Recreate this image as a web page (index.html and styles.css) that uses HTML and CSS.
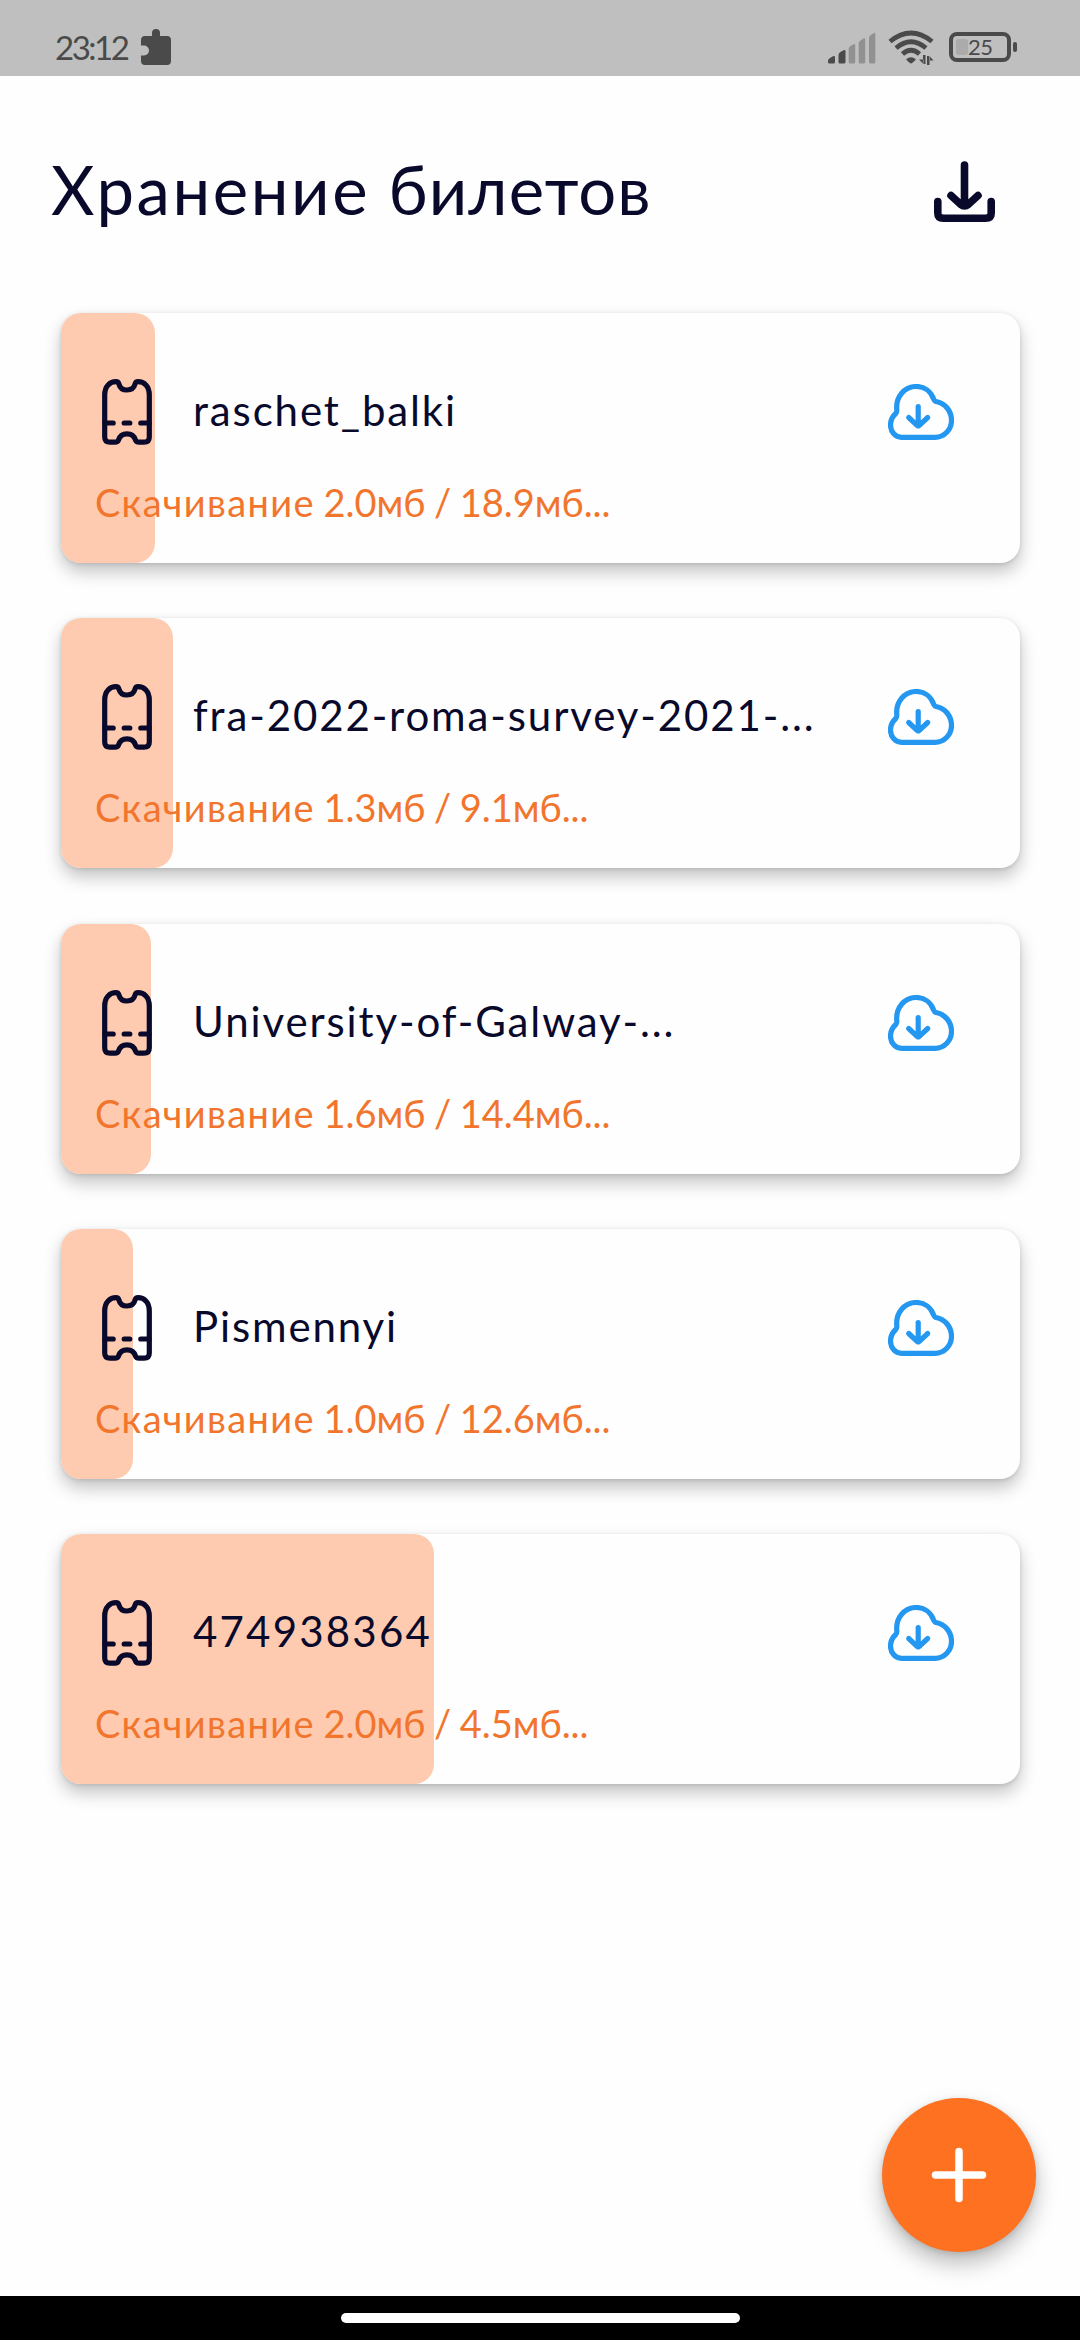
FILE: index.html
```html
<!DOCTYPE html>
<html lang="ru">
<head>
<meta charset="utf-8">
<title>Хранение билетов</title>
<link rel="stylesheet" href="styles.css">
</head>
<body>
<svg class="symbols" aria-hidden="true">
  <symbol id="ticket" viewBox="22 19 50 66">
    <path d="M24.7 35C24.7 26 30 21.7 36 21.7Q38.300 21.700 39 24.200C40 28 43 30 47 30S54 28 55 24.200Q55.700 21.700 58 21.700C64 21.700 69.300 26 69.300 35V77Q69.300 82.200 64 82.200H59Q56.200 82.200 55.500 80C54.300 76 51 73.800 47 73.800S39.700 76 38.500 80Q37.800 82.200 35 82.200H30Q24.700 82.200 24.700 77Z"/>
    <path d="M25 63H33.200M44.200 63H49.800M60.800 63H69"/>
  </symbol>
  <symbol id="cloud" viewBox="18 24 66 56">
    <path d="M31.500 77.300H65C74.500 77.300 81.500 69.500 81.500 60.500C81.500 51 75 43 66 41.500Q64.500 41 63.800 39.500C61 31.500 54.500 26.500 46.500 26.500C34.500 26.500 25.500 36.500 26.800 50Q27 52 25.700 53.500C22 57 20.500 60.500 20.500 65C20.500 72 25.500 77.300 31.500 77.300Z"/>
    <path d="M48.200 46.500V66M38.700 57.500L46.300 64.700Q48.200 66.400 50.100 64.700L57.700 57.500"/>
  </symbol>
</svg>
<div class="screen">
  <div class="status">
    <div class="status-left">
      <span class="clock">23:12</span>
      <svg class="puzzle" viewBox="0 0 30 36"><path d="M4 7H11V4Q11 0 15 0T19 4V7H26Q30 7 30 11V32Q30 36 26 36H4Q0 36 0 32V26.500H3A5 5 0 0 0 3 16.500H0V11Q0 7 4 7Z"/></svg>
    </div>
    <div class="status-right">
      <svg class="signal" viewBox="0 0 48 32">
        <path class="on" d="M0 29Q0 27 2 26L5 24.200Q7 23.500 7 25V30Q7 31.500 5.500 31.500H1.500Q0 31.500 0 30ZM10.500 23Q10.500 21 12.500 20L15.500 18.200Q17.500 17.500 17.500 19V30Q17.500 31.500 16 31.500H12Q10.500 31.500 10.500 30Z"/>
        <path class="off" d="M20.700 17Q20.700 15 22.500 14L25.500 12.200Q27.200 11.500 27.200 13V30Q27.200 31.500 26 31.500H22.200Q20.700 31.500 20.700 30ZM30.700 11.500Q30.700 9.500 32.500 8.500L35.500 6.500Q37.200 5.800 37.200 7.300V30Q37.200 31.500 36 31.500H32.200Q30.700 31.500 30.700 30ZM41 6Q41 4 42.800 3L45.500 1.200Q47.300 0 47.300 2V30Q47.300 31.500 46 31.500H42.500Q41 31.500 41 30Z"/>
      </svg>
      <svg class="wifi" viewBox="0 0 46 36">
        <path class="arc" d="M2 11.500Q23 -5.500 44 11.500M8 18Q23 5.500 38 18M14.500 24Q23 16.500 31.500 24"/>
        <path d="M18 29.500Q23 25 28 29.500L24.500 32.800Q23 34 21.500 32.800Z"/>
        <path d="M35 25V34H37.500V25ZM35.500 34L31 29.500H35.500ZM39 26V35H41.500V26ZM41 25.500L45.500 30.500H41Z"/>
      </svg>
      <div class="battery"><span class="charge"></span><span class="percent">25</span></div>
      <span class="tip"></span>
    </div>
  </div>
  <header class="header">
    <h1><span class="wide">Хранение</span> билетов</h1>
    <svg class="download" viewBox="0 0 61 61"><path d="M3.800 40.500V52Q3.800 57.200 9.500 57.200H51.500Q57.200 57.200 57.200 52V40.500M30.500 4V43M17 34.500L26.500 43.300Q30.500 46.500 34.500 43.300L44 34.500"/></svg>
  </header>
  <main class="list">
    <article class="card"><div class="progress" style="width:94px"></div>
      <div class="row"><svg class="ticket"><use href="#ticket"/></svg><h2>raschet_balki</h2><svg class="cloud"><use href="#cloud"/></svg></div>
      <p><span class="state">Скачивание</span> 2.0мб / 18.9мб...</p></article>
    <article class="card"><div class="progress" style="width:112px"></div>
      <div class="row"><svg class="ticket"><use href="#ticket"/></svg><h2>fra-2022-roma-survey-2021-...</h2><svg class="cloud"><use href="#cloud"/></svg></div>
      <p><span class="state">Скачивание</span> 1.3мб / 9.1мб...</p></article>
    <article class="card"><div class="progress" style="width:90px"></div>
      <div class="row"><svg class="ticket"><use href="#ticket"/></svg><h2>University-of-Galway-...</h2><svg class="cloud"><use href="#cloud"/></svg></div>
      <p><span class="state">Скачивание</span> 1.6мб / 14.4мб...</p></article>
    <article class="card"><div class="progress" style="width:72px"></div>
      <div class="row"><svg class="ticket"><use href="#ticket"/></svg><h2>Pismennyi</h2><svg class="cloud"><use href="#cloud"/></svg></div>
      <p><span class="state">Скачивание</span> 1.0мб / 12.6мб...</p></article>
    <article class="card"><div class="progress" style="width:373px"></div>
      <div class="row"><svg class="ticket"><use href="#ticket"/></svg><h2 class="digits">474938364</h2><svg class="cloud"><use href="#cloud"/></svg></div>
      <p><span class="state">Скачивание</span> 2.0мб / 4.5мб...</p></article>
  </main>
  <button class="fab" aria-label="Добавить"><svg viewBox="0 0 56 56"><path d="M28 4.500V51.500M4.500 28H51.500"/></svg></button>
  <footer class="nav"><span class="handle"></span></footer>
</div>
</body>
</html>
```
FILE: styles.css
```css
* { box-sizing: border-box; }
body { margin: 0; background: #fefefe; font-family: Lato, "Noto Sans", sans-serif; color: #09092b; }
.symbols { display: none; }
h1, h2, p { margin: 0; font-weight: 400; white-space: nowrap; }
.screen { position: relative; width: 1080px; height: 2340px; display: flex; flex-direction: column; overflow: hidden; }

.status { height: 76px; flex: none; background: #bfbfbf; color: #4a4a4a; display: flex; justify-content: space-between; padding: 0 63px 0 55px; }
.status svg { fill: #4a4a4a; }
.status-left, .status-right { display: flex; align-items: flex-start; }
.clock { width: 86px; font-size: 33px; line-height: 40px; margin-top: 27px; letter-spacing: -2.500px; }
.puzzle { width: 30px; height: 36px; margin-top: 29px; }
.signal { width: 48px; height: 32px; margin-top: 31.500px; }
.status .off { fill: #919191; }
.wifi { width: 46px; height: 36px; margin: 30px 0 0 12px; }
.wifi .arc { fill: none; stroke: #4a4a4a; stroke-width: 4.800; }
.battery { width: 62px; height: 30px; margin: 32px 0 0 15px; border: 4px solid #4a4a4a; border-radius: 8px; display: flex; align-items: center; padding-left: 3px; }
.charge { width: 12px; height: 16px; border-radius: 3px; background: #ababab; }
.percent { font-size: 22px; line-height: 22px; letter-spacing: -0.5px; }
.tip { width: 4px; height: 10px; margin: 42px 0 0 2px; border-radius: 2px; background: #4a4a4a; }

.header { height: 237px; flex: none; display: flex; justify-content: space-between; align-items: flex-start; padding: 85px 85px 0 51px; }
h1 { font-size: 67px; line-height: 60px; margin-top: -2px; letter-spacing: 1.100px; }
h1 .wide { letter-spacing: 2.600px; }
.download { width: 61px; height: 61px; fill: none; stroke: #09092b; stroke-width: 7.600; stroke-linecap: round; stroke-linejoin: round; }

.list { display: flex; flex-direction: column; gap: 55.250px; padding: 0 60px 0 61px; flex: 1; }
.card { position: relative; height: 250px; flex: none; border-radius: 20px; background: #fefefe; padding: 66px 66px 0 34px; box-shadow: 0 9px 17px rgba(0,0,0,.23), 0 1px 4px rgba(0,0,0,.12); }
.progress { position: absolute; left: 0; top: 0; height: 100%; border-radius: 20px; background: #fecbb0; }
.row { position: relative; display: flex; align-items: center; height: 66px; padding-left: 7px; }
.ticket { width: 50px; height: 66px; flex: none; }
.cloud { width: 66px; height: 56px; margin-left: auto; flex: none; }
.ticket, .cloud { fill: none; stroke: #09092b; stroke-width: 5.200; stroke-linecap: round; stroke-linejoin: round; }
.cloud { stroke: #2497f1; }
h2 { font-size: 42px; line-height: 50px; margin: 0 0 4px 41px; letter-spacing: 1.880px; }
h2.digits { letter-spacing: 2.200px; }
.card p { position: relative; font-size: 38px; line-height: 46px; margin-top: 34px; color: #f2752d; letter-spacing: -0.050px; word-spacing: -1px; }
.card .state { letter-spacing: 1.350px; }

.fab { position: absolute; right: 44px; top: 2098px; width: 154px; height: 154px; border: 0; border-radius: 50%; background: #fd7120; padding: 0; display: grid; place-items: center; box-shadow: 0 12px 22px rgba(0,0,0,.26), 0 2px 6px rgba(0,0,0,.12); }
.fab svg { width: 56px; height: 56px; stroke: #fff; stroke-width: 7.500; stroke-linecap: round; }
.nav { height: 44px; flex: none; background: #000; display: flex; justify-content: center; align-items: center; }
.handle { width: 399px; height: 10px; border-radius: 5px; background: #fff; }
```
